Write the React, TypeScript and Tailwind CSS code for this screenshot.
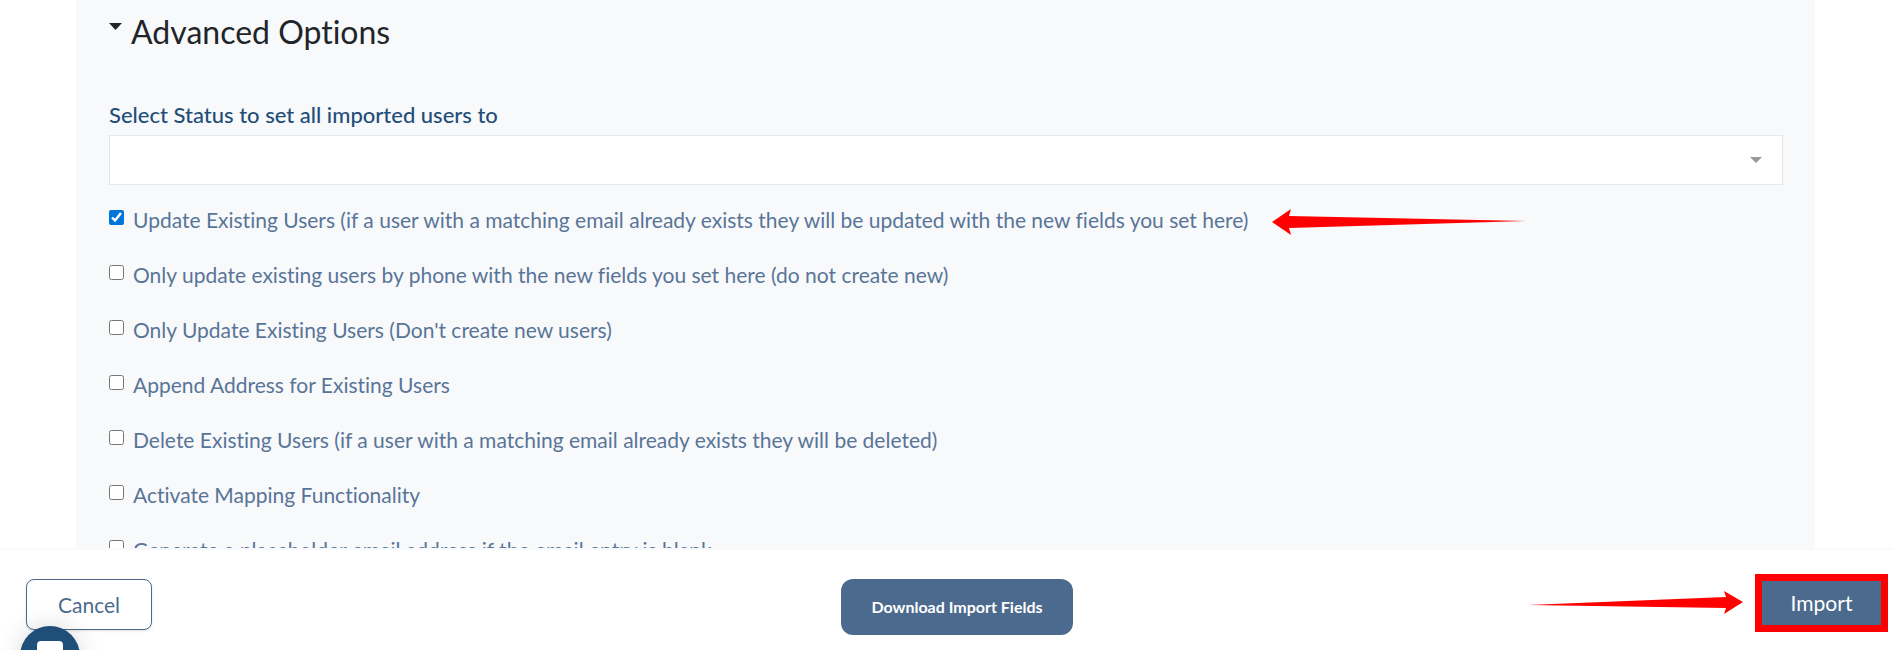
import { useState } from "react";

const OPTIONS = [
  "Update Existing Users (if a user with a matching email already exists they will be updated with the new fields you set here)",
  "Only update existing users by phone with the new fields you set here (do not create new)",
  "Only Update Existing Users (Don't create new users)",
  "Append Address for Existing Users",
  "Delete Existing Users (if a user with a matching email already exists they will be deleted)",
  "Activate Mapping Functionality",
  "Generate a placeholder email address if the email entry is blank",
];

function Caret({ className }: { className: string }) {
  return (
    <svg viewBox="0 0 12 6" preserveAspectRatio="none" className={className} fill="currentColor" aria-hidden="true">
      <path d="M0 0H12L6 6Z" />
    </svg>
  );
}

function LeftArrow() {
  return (
    <svg width="254" height="26" viewBox="0 0 254 26" className="mt-[5px] shrink-0" fill="#ff0000" aria-hidden="true">
      <path d="M0 13L19 0L17 7L254 12L17 19L19 26Z" />
    </svg>
  );
}

function RightArrow() {
  return (
    <svg width="215" height="24" viewBox="0 0 215 24" className="shrink-0" fill="#ff0000" aria-hidden="true">
      <path d="M0 14L198 6L196 0L215 11L196 23L198 17Z" />
    </svg>
  );
}

export default function App() {
  const [checked, setChecked] = useState<boolean[]>(OPTIONS.map((_, i) => i === 0));
  const toggle = (index: number) =>
    setChecked((prev) => prev.map((value, i) => (i === index ? !value : value)));

  return (
    <div className="flex h-screen flex-col overflow-hidden bg-white font-['Lato',sans-serif] text-[21px] text-[#4c6a8d] [font-variant-ligatures:none]">
      <main className="mr-[78px] ml-[76px] min-h-0 flex-1 overflow-hidden bg-[#f8f9fb] pt-3 pr-8 pl-[33px]">
        <button type="button" aria-expanded="true" className="flex items-start text-[#212529]">
          <Caret className="mt-[11px] mr-[9px] h-[7px] w-[13px]" />
          <h2 className="text-[32px] leading-10">Advanced Options</h2>
        </button>

        <label htmlFor="status" className="mt-12 block text-[22px] leading-[30px] font-medium text-[#1f4e79]">
          Select Status to set all imported users to
        </label>
        <div className="relative mt-[5px]">
          <select
            id="status"
            className="block h-[50px] w-full appearance-none border border-[#e5e7ea] bg-white px-4"
          >
            <option value=""></option>
          </select>
          <Caret className="pointer-events-none absolute top-[22px] right-[21px] h-[6px] w-3 text-[#999999]" />
        </div>

        <ul className="mt-[19px]">
          {OPTIONS.map((text, i) => (
            <li key={text} className="mb-[23px] flex h-8 items-start">
              <input
                id={`option-${i}`}
                type="checkbox"
                checked={checked[i]}
                onChange={() => toggle(i)}
                className="mt-[6px] mr-[9px] size-[15px] shrink-0 accent-[#0075d9]"
              />
              <label htmlFor={`option-${i}`} className="mr-6 leading-8 whitespace-nowrap text-[#587598]">
                {text}
              </label>
              {i === 0 && <LeftArrow />}
            </li>
          ))}
        </ul>
      </main>

      <footer className="grid h-[102px] shrink-0 grid-cols-[1fr_auto_1fr] items-start border-t-2 border-[#f8f9fb] bg-white pt-6 pr-[5px] pl-[26px]">
        <button
          type="button"
          className="mt-[5px] h-[51px] w-[126px] rounded-lg border border-[#4c6a8d] bg-white shadow-sm"
        >
          Cancel
        </button>
        <button
          type="button"
          className="mt-[5px] h-14 w-[232px] rounded-xl bg-[#4c6a8d] text-base font-bold text-white"
        >
          Download Import Fields
        </button>
        <div className="flex items-center justify-end gap-3">
          <RightArrow />
          <button
            type="button"
            className="h-[58px] w-[133px] border-[7px] border-[#ff0000] bg-[#4c6a8d] text-white"
          >
            Import
          </button>
        </div>
      </footer>

      <button
        type="button"
        aria-label="Open chat"
        className="fixed -bottom-9 left-5 flex size-[60px] justify-center rounded-full bg-[#1f4e79] pt-[15px] shadow-[0_0_24px_rgba(0,0,0,0.15)]"
      >
        <svg width="26" height="28" viewBox="0 0 26 28" fill="#ffffff" aria-hidden="true">
          <path d="M4 0H22Q26 0 26 4V28L20 23H4Q0 23 0 19V4Q0 0 4 0Z" />
        </svg>
      </button>
    </div>
  );
}
